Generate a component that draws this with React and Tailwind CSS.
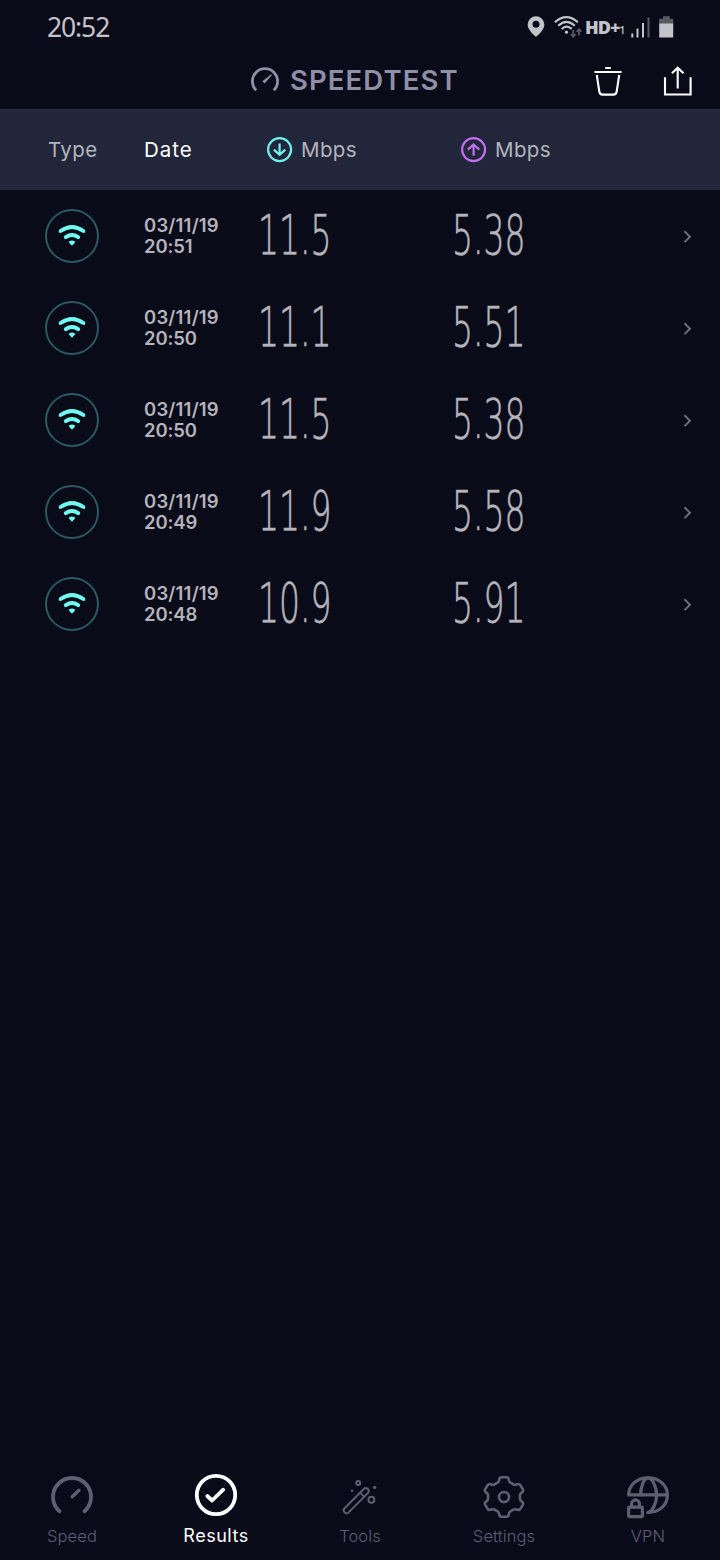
import React from 'react';

const results = [
  { id: 1, date: '03/11/19', time: '20:51', down: '11.5', up: '5.38' },
  { id: 2, date: '03/11/19', time: '20:50', down: '11.1', up: '5.51' },
  { id: 3, date: '03/11/19', time: '20:50', down: '11.5', up: '5.38' },
  { id: 4, date: '03/11/19', time: '20:49', down: '11.9', up: '5.58' },
  { id: 5, date: '03/11/19', time: '20:48', down: '10.9', up: '5.91' },
];

// Status bar
const StatusBar = () => (
  <div className="flex h-[54px] items-center justify-between pl-[47px] pr-[46px] text-[#c3c3c9]">
    <span className="font-['Noto_Sans'] text-[26.5px] leading-none tracking-[-1.1px]">20:52</span>
    <div className="flex items-center">
      <svg className="h-6 w-[18px]" viewBox="0 0 18 24" fill="currentColor">
        <path
          fillRule="evenodd"
          d="M9 1.2a8.4 8.4 0 0 0-8.4 8.4C.6 15.4 9 22 9 22s8.4-6.600 8.400-12.400A8.400 8.400 0 0 0 9 1.200zm0 4.600a3.500 3.500 0 1 1 0 7 3.500 3.500 0 0 1 0-7z"
        />
      </svg>
      <svg className="ml-[9px] h-6 w-[29px]" viewBox="0 0 29 24" fill="none" stroke="currentColor">
        <path d="M.900 7.300Q12.300-2.900 23.900 7.300" strokeWidth="2.100" />
        <path d="M4.200 10.800Q12.500 3 20.800 10.800" strokeWidth="2.100" />
        <path d="M7.600 13.900Q12.600 9.200 17.800 13.900" strokeWidth="2.100" />
        <circle cx="12.500" cy="17.200" r="1.600" fill="currentColor" stroke="none" />
        <path d="M19.200 15v6.500M16.700 19l2.500 2.800L21.700 19M25 20.500V14M22.600 16.800l2.400-2.800 2.400 2.800" stroke="#5a5a64" strokeWidth="1.700" />
      </svg>
      <span className="ml-0.5 flex w-[41px] items-baseline font-['Open_Sans'] text-[18px] font-extrabold leading-none tracking-[-1px]">
        HD+<span className="text-[10px] font-semibold">1</span>
      </span>
      <svg className="ml-[5px] h-6 w-[20px]" viewBox="0 0 20 24" fill="none" stroke="currentColor" strokeWidth="2">
        <path d="M1.300 18.500v4M6.500 13.500v9M12 8v14.500" />
        <path d="M17.500 2.500v20" stroke="#5a5a64" />
      </svg>
      <svg className="ml-[8px] h-6 w-[15px]" viewBox="0 0 15 24">
        <path d="M4 1.300h6.800v2.400h3.400v6H.2v-6H4z" fill="#5a5a64" />
        <path d="M.2 8.500h14v14H.2z" fill="currentColor" />
      </svg>
    </div>
  </div>
);

// App bar with logo and actions
const AppBar = () => (
  <header className="flex h-[55px] items-center pb-0.5 pl-[250px] pr-[27px]">
    <svg className="h-[30px] w-[30px] shrink-0" viewBox="0 0 30 30" fill="none" stroke="#8f8fa5" strokeWidth="2.800">
      <path d="M6.200 24.300a12.600 12.600 0 1 1 17.600 0" />
      <path d="M12.300 15.300L21.200 8.200 22 9 14.600 17.600z" fill="#8f8fa5" stroke="none" />
    </svg>
    <h1 className="ml-[10px] w-[180px] whitespace-nowrap font-['Inter'] text-[27.5px] font-semibold leading-none tracking-[1.1px] text-[#8f8fa5]">
      SPEEDTEST
    </h1>
    <div className="ml-auto flex items-center gap-[40px] text-white">
      <button>
        <svg className="h-[30px] w-[30px]" viewBox="0 0 30 30" fill="none" stroke="currentColor" strokeWidth="2.100">
          <path d="M12.200 2h5.600M1.500 6h27" />
          <path d="M3.800 9l2.500 16.500Q6.800 28.600 9.600 28.600h10.800q2.800 0 3.300-3.100L26.200 9" />
        </svg>
      </button>
      <button>
        <svg className="h-[30px] w-[30px]" viewBox="0 0 30 30" fill="none" stroke="currentColor" strokeWidth="2.100">
          <path d="M2 11.300V28.500h25.600V11.300" />
          <path d="M14.700 22.500V3M8.900 7.200l5.800-5.400 5.800 5.400" />
        </svg>
      </button>
    </div>
  </header>
);

const ArrowCircle = ({ up }) => (
  <svg className="h-[26px] w-[26px]" viewBox="0 0 26 26" fill="none" stroke={up ? '#bf71ed' : '#6ff4ec'} strokeWidth="2.200">
    <circle cx="12.600" cy="12.600" r="11.500" />
    {up ? (
      <path d="M12.600 18.800V7.600M6.900 12.600l5.700-5.200 5.700 5.200" />
    ) : (
      <path d="M12.600 6.600v11M6.900 12.600l5.700 5.200 5.700-5.200" />
    )}
  </svg>
);

const TableHeader = () => (
  <div className="flex h-[81px] items-center border-t border-[#2b2d40] bg-[#22263a] pl-12 font-['Inter'] text-[20.5px] tracking-[0.4px] text-[#b4b4bb]">
    <span className="w-24">Type</span>
    <span className="w-[123px] tracking-[1px] text-white">Date</span>
    <span className="flex w-[194px] items-center gap-2">
      <ArrowCircle />
      Mbps
    </span>
    <span className="flex items-center gap-2">
      <ArrowCircle up />
      Mbps
    </span>
  </div>
);

const WifiBadge = () => (
  <svg className="h-[54px] w-[54px]" viewBox="0 0 54 54" fill="none" stroke="#6ffbf1">
    <circle cx="27" cy="27" r="26" stroke="#2b5a63" strokeWidth="2" />
    <path d="M15.600 22Q27 13.800 38.400 22" strokeWidth="3.900" strokeLinecap="round" />
    <path d="M20.800 28.200Q27 24 33.200 28.200" strokeWidth="3.900" strokeLinecap="round" />
    <path d="M24.500 33.100Q27 31.500 29.500 33.100L27 35.700z" fill="#6ffbf1" strokeWidth="1.400" strokeLinejoin="round" />
  </svg>
);

// Tall narrow digits
const Speed = ({ value }) => (
  <span className="block w-[194px] pb-0.5">
    <span className="block origin-left scale-x-[0.59] font-['DejaVu_Sans'] text-[56px] font-extralight leading-none text-[#b4b4ba] [-webkit-text-stroke:0.7px_#b4b4ba]">
      {value}
    </span>
  </span>
);

const ResultRow = ({ result }) => (
  <li className="flex h-[92px] items-center pl-[45px] pr-[27px]">
    <div className="w-[99px]">
      <WifiBadge />
    </div>
    <div className="w-[114px] font-['Inter'] text-[18.5px] font-semibold leading-[21px] text-[#b4b4ba]">
      <div className="tracking-[0.2px]">{result.date}</div>
      <div className="tracking-[-0.1px]">{result.time}</div>
    </div>
    <Speed value={result.down} />
    <Speed value={result.up} />
    <svg className="ml-auto h-3.5 w-2.5" viewBox="0 0 10 14" fill="none" stroke="#6c6c7c" strokeWidth="2">
      <path d="M1.500 2.300l5.500 5.400L1.500 13.100" />
    </svg>
  </li>
);

// One tooth of the gear, repeated six times around the centre
const TOOTH = [
  [-6.2, -14.3], [-4.9, -15.2], [-4.7, -17], [-4.4, -19.7], [-2.6, -19.7],
  [2.6, -19.7], [4.4, -19.7], [4.7, -17], [4.9, -15.2], [6.2, -14.3],
];

const gearPath = () => {
  let d = '';
  for (let i = 0; i < 6; i++) {
    const a = (i * Math.PI) / 3;
    const p = TOOTH.map(([x, y]) => {
      const px = 24 + 1.03 * (x * Math.cos(a) - y * Math.sin(a));
      const py = 25 + x * Math.sin(a) + y * Math.cos(a);
      return `${px.toFixed(2)} ${py.toFixed(2)}`;
    });
    d += `${i === 0 ? 'M' : 'L'}${p[0]}Q${p[1]} ${p[2]}Q${p[3]} ${p[4]}L${p[5]}Q${p[6]} ${p[7]}Q${p[8]} ${p[9]}`;
  }
  return d + 'z';
};

const navItems = [
  {
    label: 'Speed',
    icon: (
      <g strokeWidth="3.800">
        <path d="M11.500 39.300a19 19 0 1 1 25 0" />
        <path d="M24.200 24.800l6.800-6.500" strokeWidth="3.300" />
      </g>
    ),
  },
  {
    label: 'Results',
    active: true,
    icon: (
      <g strokeWidth="3.800">
        <circle cx="24" cy="23" r="19.200" />
        <path d="M15.300 24l4.800 4.500L31.200 17.700" />
      </g>
    ),
  },
  {
    label: 'Tools',
    icon: (
      <g strokeWidth="1.900">
        <rect x="-2.900" y="-16.500" width="5.800" height="33" rx="2.900" transform="translate(20.200 28.700) rotate(45)" />
        <path d="M24.300 20.900l3.800 3.800" />
        <circle cx="22.200" cy="11" r="2" />
        <circle cx="35.400" cy="27.700" r="3" />
        <circle cx="38.700" cy="15.400" r="1.700" fill="currentColor" stroke="none" />
        <circle cx="16" cy="18.800" r="1.300" fill="currentColor" stroke="none" />
      </g>
    ),
  },
  {
    label: 'Settings',
    icon: (
      <g strokeWidth="2.600">
        <path d={gearPath()} />
        <circle cx="24" cy="25" r="5" />
      </g>
    ),
  },
  {
    label: 'VPN',
    icon: (
      <g strokeWidth="3.200">
        <path d="M4.700 22.900C4.700 13 13 5.800 24 5.800s19.400 7.200 19.400 17.400S35 40.400 24 40.400M4.700 22.900h38.700" />
        <path d="M16.600 22.900c0-8 3.400-17.100 7.400-17.100s8.600 8.600 8.600 17.100-4.600 17.500-8.600 17.500" />
        <rect x="4.600" y="35.200" width="13.800" height="9.400" rx="0.800" />
        <path d="M7.600 35v-3.200a3.900 3.900 0 0 1 7.800 0V35" />
      </g>
    ),
  },
];

const BottomNav = () => (
  <nav className="mt-auto grid h-[88px] grid-cols-5">
    {navItems.map((item) => (
      <button
        key={item.label}
        className={`flex flex-col items-center font-['Inter'] text-[16.5px] leading-[20px] ${
          item.active ? 'text-white' : 'font-light text-[#5f5f73]'
        }`}
      >
        <svg
          className="h-12 w-12"
          viewBox="0 0 48 48"
          fill="none"
          stroke="currentColor"
          strokeLinecap="round"
          strokeLinejoin="round"
        >
          {item.icon}
        </svg>
        <span className={item.active ? 'mt-1.5 text-[18px] tracking-[0.5px]' : 'mt-1.5 tracking-[0.1px]'}>{item.label}</span>
      </button>
    ))}
  </nav>
);

function App() {
  return (
    <div className="flex h-[1560px] w-[720px] flex-col overflow-hidden bg-[#090b19]">
      <StatusBar />
      <AppBar />
      <TableHeader />
      <ul>
        {results.map((result) => (
          <ResultRow key={result.id} result={result} />
        ))}
      </ul>
      <BottomNav />
    </div>
  );
}

export default App;
